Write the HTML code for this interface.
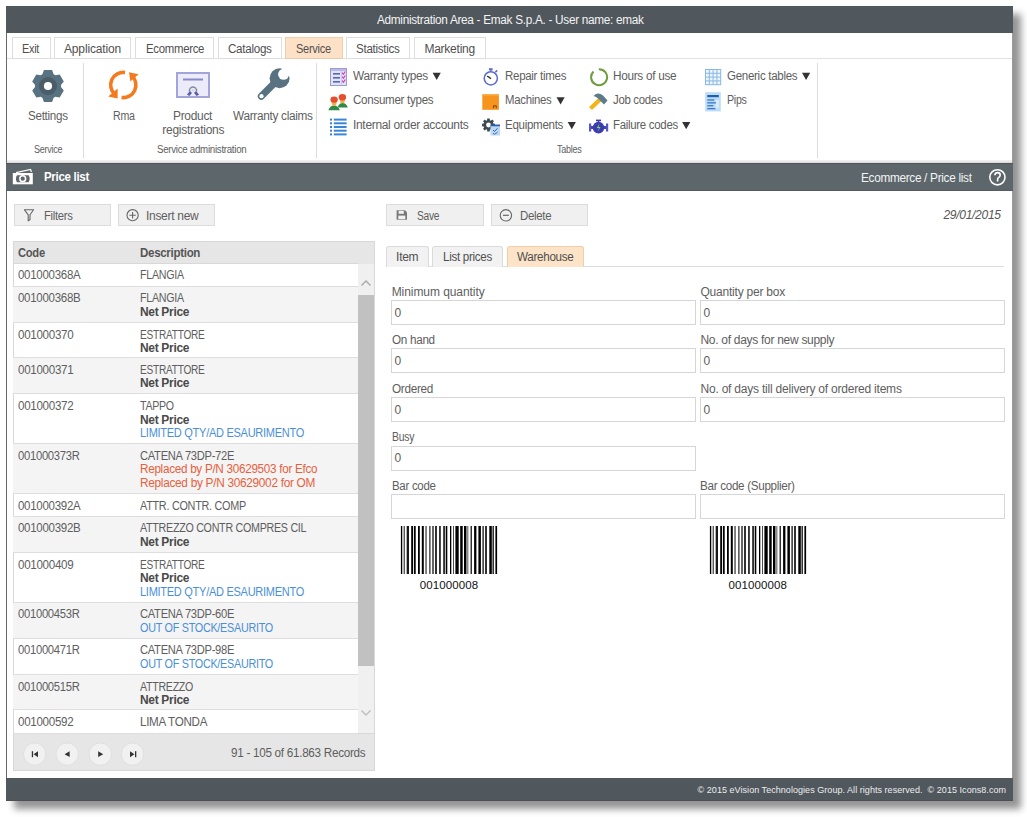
<!DOCTYPE html>
<html><head><meta charset="utf-8"><style>
*{margin:0;padding:0;box-sizing:border-box}
html,body{width:1027px;height:817px;overflow:hidden;background:#fff;font-family:"Liberation Sans",sans-serif}
.a{position:absolute}
.t{position:absolute;white-space:pre;font-family:"Liberation Sans",sans-serif}
.row{position:absolute;left:13px;width:345px}
</style></head><body>
<div class="a" style="left:6px;top:6px;width:1007px;height:795px;background:#fff;box-shadow:8px 8px 7px rgba(0,0,0,0.42);border-left:1px solid #6a6a6a;border-right:1px solid #9a9a9a"></div>
<!-- title bar -->
<div class="a" style="left:6px;top:6px;width:1007px;height:27px;background:#50575d"></div>
<!-- tabs -->
<div class="a" style="left:7px;top:58px;width:1005px;height:1px;background:#e2e2e2"></div>
<div class="a" style="left:12px;top:37px;width:39px;height:22px;border:1px solid #dedede;background:#fff"></div>
<div class="a" style="left:54px;top:37px;width:77px;height:22px;border:1px solid #dedede;background:#fff"></div>
<div class="a" style="left:135px;top:37px;width:79px;height:22px;border:1px solid #dedede;background:#fff"></div>
<div class="a" style="left:218px;top:37px;width:64px;height:22px;border:1px solid #dedede;background:#fff"></div>
<div class="a" style="left:285px;top:37px;width:58px;height:22px;border:1px solid #f3cda6;border-bottom-color:#e9c9a9;background:#fde1c6"></div>
<div class="a" style="left:346px;top:37px;width:64px;height:22px;border:1px solid #dedede;background:#fff"></div>
<div class="a" style="left:414px;top:37px;width:72px;height:22px;border:1px solid #dedede;background:#fff"></div>
<!-- ribbon separators -->
<div class="a" style="left:83px;top:63px;width:1px;height:95px;background:#dcdcdc"></div>
<div class="a" style="left:316px;top:63px;width:1px;height:95px;background:#dcdcdc"></div>
<div class="a" style="left:817px;top:63px;width:1px;height:95px;background:#dcdcdc"></div>
<!-- band -->
<div class="a" style="left:7px;top:160px;width:1005px;height:3px;background:linear-gradient(#f3f3f3,#dcdcdc)"></div>
<!-- header -->
<div class="a" style="left:6px;top:163px;width:1007px;height:28px;background:#5c666b;border-top:1px solid #4f5459;border-bottom:1px solid #555c61"></div>
<!-- footer -->
<div class="a" style="left:6px;top:778px;width:1007px;height:23px;background:#50575d;border-bottom:1px solid #4d4f52"></div>
<!-- buttons -->
<div class="a" style="left:14px;top:204px;width:97px;height:22px;background:#f0f0f0;border:1px solid #dcdcdc"></div>
<div class="a" style="left:118px;top:204px;width:97px;height:22px;background:#f0f0f0;border:1px solid #dcdcdc"></div>
<div class="a" style="left:386px;top:204px;width:98px;height:22px;background:#f0f0f0;border:1px solid #dcdcdc"></div>
<div class="a" style="left:491px;top:204px;width:97px;height:22px;background:#f0f0f0;border:1px solid #dcdcdc"></div>
<!-- grid -->
<div class="a" style="left:13px;top:241px;width:362px;height:530px;border:1px solid #d8d8d8;background:#fff"></div>
<div class="a" style="left:13px;top:241px;width:362px;height:22.6px;background:#e6e6e6;border:1px solid #d8d8d8;border-bottom:0"></div>
<div class="a" style="left:14px;top:263px;width:344px;height:1px;background:#d8d8d8"></div>
<div class="a" style="left:358px;top:264px;width:16px;height:469px;background:#f0f0f0"></div>
<div class="a" style="left:358px;top:295px;width:16px;height:371px;background:#c1c1c1"></div>
<div class="a" style="left:13px;top:733px;width:362px;height:38px;background:#e6e6e6;border:1px solid #d8d8d8"></div>
<!-- right tabs -->
<div class="a" style="left:386px;top:266px;width:618px;height:1px;background:#dedede"></div>
<div class="a" style="left:386px;top:246px;width:43px;height:21px;border:1px solid #dadada;border-bottom:0;border-radius:3px 3px 0 0;background:#f2f2f2"></div>
<div class="a" style="left:432px;top:246px;width:71px;height:21px;border:1px solid #dadada;border-bottom:0;border-radius:3px 3px 0 0;background:#f2f2f2"></div>
<div class="a" style="left:507px;top:246px;width:77px;height:21px;border:1px solid #f3cda6;border-bottom:0;border-radius:3px 3px 0 0;background:#fde3c8"></div>
<!-- inputs -->
<div class="a" style="left:391px;top:300px;width:305px;height:25px;border:1px solid #d6d6d6"></div>
<div class="a" style="left:391px;top:348px;width:305px;height:25px;border:1px solid #d6d6d6"></div>
<div class="a" style="left:391px;top:397px;width:305px;height:25px;border:1px solid #d6d6d6"></div>
<div class="a" style="left:391px;top:446px;width:305px;height:25px;border:1px solid #d6d6d6"></div>
<div class="a" style="left:391px;top:494px;width:305px;height:25px;border:1px solid #d6d6d6"></div>
<div class="a" style="left:700px;top:300px;width:305px;height:25px;border:1px solid #d6d6d6"></div>
<div class="a" style="left:700px;top:348px;width:305px;height:25px;border:1px solid #d6d6d6"></div>
<div class="a" style="left:700px;top:397px;width:305px;height:25px;border:1px solid #d6d6d6"></div>
<div class="a" style="left:700px;top:494px;width:305px;height:25px;border:1px solid #d6d6d6"></div>
<svg class="a" style="left:28px;top:66px;" width="40" height="40" viewBox="28 66 40 40"><path d="M42.40,74.27 L43.90,70.12 L52.10,70.12 L53.60,74.27 L55.36,75.28 L59.70,74.51 L63.80,81.61 L60.96,84.98 L60.96,87.02 L63.80,90.39 L59.70,97.49 L55.36,96.72 L53.60,97.73 L52.10,101.88 L43.90,101.88 L42.40,97.73 L40.64,96.72 L36.30,97.49 L32.20,90.39 L35.04,87.02 L35.04,84.98 L32.20,81.61 L36.30,74.51 L40.64,75.28Z" fill="#587282"/><circle cx="48" cy="86" r="9" fill="#4a5d69"/><circle cx="48" cy="86" r="4.1" fill="#fff"/></svg>
<svg class="a" style="left:104px;top:66px;" width="38" height="38" viewBox="104 66 38 38"><path d="M125.05,72.52 A12.6,12.6 0 0 0 114.71,94.22" stroke="#f47a1f" stroke-width="3.6" fill="none"/><path d="M121.55,97.48 A12.6,12.6 0 0 0 131.89,75.78" stroke="#f47a1f" stroke-width="3.6" fill="none"/><path d="M108.2,96.5 L117.6,88.6 L117.6,98.5Z" fill="#f47a1f"/><path d="M129,72.2 L138.6,74.2 L130.4,81.5Z" fill="#f47a1f"/></svg>
<svg class="a" style="left:172px;top:68px;" width="42" height="34" viewBox="172 68 42 34"><rect x="177" y="73" width="32" height="24" fill="#ebebf9" stroke="#a4a4dc" stroke-width="2"/><rect x="183" y="78.5" width="20" height="2" fill="#8b8bcb"/><path d="M189.5,91.5 A3.6,3.6 0 1 1 196.5,91.5" stroke="#7a8a9a" stroke-width="1.4" fill="none"/><circle cx="193" cy="90.3" r="1.6" fill="#d8d8f0"/><path d="M187,94.5 L190,91 L192,93 L189.3,96Z M199,94.5 L196,91 L194,93 L196.7,96Z" fill="#5a5aae"/></svg>
<svg class="a" style="left:252px;top:64px;" width="44" height="42" viewBox="252 64 44 42"><line x1="261.3" y1="96.3" x2="276" y2="81.5" stroke="#587282" stroke-width="7" stroke-linecap="round"/><circle cx="279.6" cy="78.2" r="10" fill="#587282"/><circle cx="283.6" cy="74.3" r="5.5" fill="#fff"/><path d="M281.5,68.5 L289.5,76.5 L296,70 L288,62Z" fill="#fff"/><circle cx="261.5" cy="96.2" r="2.1" fill="#fff"/></svg>
<svg class="a" style="left:329px;top:67px;" width="19" height="20" viewBox="329 67 19 20"><rect x="330.5" y="68.5" width="16" height="17" fill="#e3e3f6" stroke="#9b9bd6" stroke-width="1"/><rect x="331" y="69" width="15" height="2" fill="#b9b9e3"/><rect x="333" y="73" width="7" height="1.6" fill="#5568b8"/><path d="M342,72.5 L343.4,74.3 L345.3,71.5" stroke="#d23cc0" stroke-width="1.2" fill="none"/><rect x="333" y="77" width="7" height="1.6" fill="#5568b8"/><path d="M342,76.5 L343.4,78.3 L345.3,75.5" stroke="#d23cc0" stroke-width="1.2" fill="none"/><rect x="333" y="81" width="7" height="1.6" fill="#5568b8"/><path d="M342,80.5 L343.4,82.3 L345.3,79.5" stroke="#d23cc0" stroke-width="1.2" fill="none"/><rect x="341" y="71" width="1" height="14" fill="#c8c8ee"/></svg>
<svg class="a" style="left:327px;top:92px;" width="24" height="20" viewBox="327 92 24 20"><path d="M337.6,107.6 Q339,103 342.5,103 Q346.3,103 347.8,107.6Z" fill="#2f8a45"/><ellipse cx="342.4" cy="100.4" rx="2.5" ry="2.9" fill="#f6ad4c"/><ellipse cx="342.4" cy="97.2" rx="3.7" ry="3.2" fill="#e4502d"/><path d="M328.4,110.2 Q329.8,105.5 334,105.5 Q338.2,105.5 339.8,110.2Z" fill="#2f8a45"/><ellipse cx="334.1" cy="102.8" rx="2.5" ry="2.9" fill="#f6ad4c"/><ellipse cx="334.1" cy="99.6" rx="3.7" ry="3.2" fill="#e4502d"/></svg>
<svg class="a" style="left:329px;top:117px;" width="19" height="20" viewBox="329 117 19 20"><rect x="330" y="118.6" width="2" height="2" fill="#3a7fcf"/><rect x="333.8" y="118.6" width="12.8" height="2" fill="#3a86d6"/><rect x="330" y="122.3" width="2" height="2" fill="#3a7fcf"/><rect x="333.8" y="122.3" width="12.8" height="2" fill="#3a86d6"/><rect x="330" y="126.0" width="2" height="2" fill="#3a7fcf"/><rect x="333.8" y="126.0" width="12.8" height="2" fill="#3a86d6"/><rect x="330" y="129.7" width="2" height="2" fill="#3a7fcf"/><rect x="333.8" y="129.7" width="12.8" height="2" fill="#3a86d6"/><rect x="330" y="133.4" width="2" height="2" fill="#3a7fcf"/><rect x="333.8" y="133.4" width="12.8" height="2" fill="#3a86d6"/></svg>
<svg class="a" style="left:482px;top:67px;" width="18" height="20" viewBox="482 67 18 20"><circle cx="490.8" cy="78.3" r="6.6" fill="#fff" stroke="#5d6bd2" stroke-width="1.5"/><rect x="489" y="68.2" width="3.6" height="2.2" fill="#5d6bd2"/><rect x="490.2" y="70" width="1.2" height="2" fill="#5d6bd2"/><path d="M495.3,72.3 L497.2,70.4" stroke="#5d6bd2" stroke-width="1.6"/><path d="M487.2,76 L491,78.6" stroke="#333" stroke-width="1.5"/></svg>
<svg class="a" style="left:481px;top:93px;" width="19" height="18" viewBox="481 93 19 18"><rect x="482.3" y="94.2" width="16.6" height="15.6" fill="#f7941d"/><rect x="482.3" y="94.2" width="16.6" height="1.3" fill="#fbb04e"/><path d="M493.5,108.2 L493.5,105.8 L496.3,105.8 L496.3,108.2" stroke="#6b3a08" stroke-width="0.9" fill="none"/></svg>
<svg class="a" style="left:481px;top:117px;" width="20" height="20" viewBox="481 117 20 20"><path d="M487.12,120.19 L487.19,118.53 L489.81,118.53 L489.88,120.19 L490.92,120.63 L492.15,119.50 L494.00,121.35 L492.87,122.58 L493.31,123.62 L494.97,123.69 L494.97,126.31 L493.31,126.38 L492.87,127.42 L494.00,128.65 L492.15,130.50 L490.92,129.37 L489.88,129.81 L489.81,131.47 L487.19,131.47 L487.12,129.81 L486.08,129.37 L484.85,130.50 L483.00,128.65 L484.13,127.42 L483.69,126.38 L482.03,126.31 L482.03,123.69 L483.69,123.62 L484.13,122.58 L483.00,121.35 L484.85,119.50 L486.08,120.63Z" fill="#3d4a52"/><circle cx="488.5" cy="125" r="2.4" fill="#fff"/><rect x="490.5" y="125" width="9.5" height="10.5" fill="#bcd8f4"/><rect x="490.5" y="124.5" width="9.5" height="1.8" fill="#2f62b5"/><path d="M493,130 L494.5,131.5 L497.5,128.3" stroke="#2f62b5" stroke-width="1" fill="none"/><path d="M493,133.3 L494.5,134.3 L497.5,132.3" stroke="#2f62b5" stroke-width="0.9" fill="none"/></svg>
<svg class="a" style="left:588px;top:67px;" width="22" height="20" viewBox="588 67 22 20"><path d="M593.5,71.5 A8,8 0 1 0 598.8,69.2" stroke="#6f9c3d" stroke-width="2" fill="none"/></svg>
<svg class="a" style="left:587px;top:91px;" width="22" height="21" viewBox="587 91 22 21"><line x1="590.5" y1="108.5" x2="600" y2="99.5" stroke="#f5b416" stroke-width="4.2" stroke-linecap="butt"/><path d="M593.5,96 Q598,91.5 603,95.5 L607.5,100.5 L604,104.5 L600,100.5 L597.5,98 Q595.5,96.5 593.5,96Z" fill="#5b7b8b"/></svg>
<svg class="a" style="left:588px;top:118px;" width="22" height="17" viewBox="588 118 22 17"><rect x="589" y="123.5" width="2.2" height="8" fill="#5656c0"/><rect x="591" y="126" width="3" height="3" fill="#4444b8"/><rect x="606" y="123.5" width="2.2" height="8" fill="#5656c0"/><rect x="603" y="126" width="3" height="3" fill="#4444b8"/><circle cx="598.5" cy="127.6" r="5.8" fill="#3b3bb2"/><rect x="596" y="119.6" width="5" height="1.6" fill="#3b3bb2"/><rect x="597.8" y="120.5" width="1.4" height="2" fill="#3b3bb2"/><path d="M599.5,123.5 L596.8,128 L599,128 L597.5,132 L600.5,127 L598.5,127Z" fill="#8ee04a"/></svg>
<svg class="a" style="left:704px;top:68px;" width="18" height="18" viewBox="704 68 18 18"><rect x="705" y="69" width="15.6" height="15.6" fill="#eef6fd"/><rect x="705.0" y="69" width="1" height="16" fill="#88b9e6"/><rect x="705" y="69.0" width="16" height="1" fill="#88b9e6"/><rect x="708.8" y="69" width="1" height="16" fill="#88b9e6"/><rect x="705" y="72.8" width="16" height="1" fill="#88b9e6"/><rect x="712.6" y="69" width="1" height="16" fill="#88b9e6"/><rect x="705" y="76.6" width="16" height="1" fill="#88b9e6"/><rect x="716.4" y="69" width="1" height="16" fill="#88b9e6"/><rect x="705" y="80.4" width="16" height="1" fill="#88b9e6"/><rect x="720.2" y="69" width="1" height="16" fill="#88b9e6"/><rect x="705" y="84.2" width="16" height="1" fill="#88b9e6"/></svg>
<svg class="a" style="left:704px;top:91px;" width="18" height="22" viewBox="704 91 18 22"><rect x="705.2" y="92.2" width="15.6" height="19.2" fill="#bcdcf7"/><rect x="707.3" y="95" width="11.5" height="2.2" fill="#1f5fb0"/><rect x="707.3" y="99.3" width="7" height="1.3" fill="#3a78c6"/><rect x="707.3" y="102.2" width="9" height="1.3" fill="#3a78c6"/><rect x="707.3" y="105.1" width="6" height="1.3" fill="#3a78c6"/><rect x="707.3" y="108" width="8" height="1.3" fill="#3a78c6"/><rect x="715.8" y="100" width="3" height="8" fill="#eaf4fd" opacity="0.7"/></svg>
<svg class="a" style="left:431px;top:71px;" width="12" height="10" viewBox="431 71 12 10"><path d="M432.6,72.8 L440.8,72.8 L436.70000000000005,80.0Z" fill="#333"/></svg>
<svg class="a" style="left:555px;top:96px;" width="12" height="10" viewBox="555 96 12 10"><path d="M556.5,97.2 L564.7,97.2 L560.6,104.4Z" fill="#333"/></svg>
<svg class="a" style="left:566px;top:121px;" width="12" height="10" viewBox="566 121 12 10"><path d="M567.7,122 L575.9000000000001,122 L571.8000000000001,129.2Z" fill="#333"/></svg>
<svg class="a" style="left:681px;top:121px;" width="12" height="10" viewBox="681 121 12 10"><path d="M682.1,122 L690.3000000000001,122 L686.2,129.2Z" fill="#333"/></svg>
<svg class="a" style="left:801px;top:71px;" width="12" height="10" viewBox="801 71 12 10"><path d="M802,72.8 L810.2,72.8 L806.1,80.0Z" fill="#333"/></svg>
<svg class="a" style="left:10px;top:166px;" width="26" height="22" viewBox="10 166 26 22"><rect x="12.8" y="173" width="20" height="11.3" fill="#fff"/><path d="M16,172.6 L30.6,169.5 L31.4,172" stroke="#fff" stroke-width="1.2" fill="none"/><path d="M17,175.2 L28.6,175.2 Q30.8,178.8 28.6,182.3 L17,182.3 Q14.8,178.8 17,175.2Z" fill="#5f666c"/><circle cx="22.7" cy="178.7" r="2.9" fill="none" stroke="#fff" stroke-width="1.5"/></svg>
<svg class="a" style="left:986px;top:166px;" width="24" height="24" viewBox="986 166 24 24"><circle cx="997.4" cy="177.3" r="7.6" fill="none" stroke="#fff" stroke-width="1.6"/><path d="M994.9,175.2 Q995,172.6 997.6,172.6 Q1000.2,172.6 1000.2,175 Q1000.2,176.6 998.5,177.6 Q997.6,178.2 997.6,179.6 L997.6,181.6" stroke="#fff" stroke-width="1.6" fill="none"/></svg>
<svg class="a" style="left:22px;top:207px;" width="14" height="16" viewBox="22 207 14 16"><path d="M24.5,209.8 L33.6,209.8 L30,214.8 L30,219.8 L28.2,220.8 L28.2,214.8Z" fill="none" stroke="#666" stroke-width="1.1" stroke-linejoin="round"/></svg>
<svg class="a" style="left:125px;top:208px;" width="15" height="15" viewBox="125 208 15 15"><circle cx="132.6" cy="215.2" r="5.6" fill="none" stroke="#666" stroke-width="1.1"/><path d="M132.6,212 L132.6,218.4 M129.4,215.2 L135.8,215.2" stroke="#666" stroke-width="1.1"/></svg>
<svg class="a" style="left:394px;top:208px;" width="15" height="15" viewBox="394 208 15 15"><path d="M396.6,210.2 L405,210.2 L407,212.2 L407,219.8 L396.6,219.8Z" fill="#777"/><rect x="398.6" y="210.8" width="5.2" height="3" fill="#f0f0f0"/><rect x="398.3" y="215.6" width="7" height="3.6" fill="#f0f0f0"/></svg>
<svg class="a" style="left:498px;top:208px;" width="16" height="16" viewBox="498 208 16 16"><circle cx="505.9" cy="215.3" r="5.7" fill="none" stroke="#666" stroke-width="1.1"/><path d="M502.9,215.3 L508.9,215.3" stroke="#666" stroke-width="1.2"/></svg>
<svg class="a" style="left:360px;top:277px;" width="12" height="10" viewBox="360 277 12 10"><path d="M361.5,285.5 L366,281 L370.5,285.5" stroke="#a8a8a8" stroke-width="1.4" fill="none"/></svg>
<svg class="a" style="left:360px;top:708px;" width="12" height="10" viewBox="360 708 12 10"><path d="M361.5,710.5 L366,715 L370.5,710.5" stroke="#bdbdbd" stroke-width="1.4" fill="none"/></svg>
<svg class="a" style="left:20px;top:740px;" width="128" height="29" viewBox="20 740 128 29"><circle cx="34.7" cy="754.1" r="11.2" fill="#f1f1f1" stroke="#dcdcdc" stroke-width="0.8"/><circle cx="67.2" cy="754.1" r="11.2" fill="#f1f1f1" stroke="#dcdcdc" stroke-width="0.8"/><circle cx="100.3" cy="754.1" r="11.2" fill="#f1f1f1" stroke="#dcdcdc" stroke-width="0.8"/><circle cx="132.6" cy="754.1" r="11.2" fill="#f1f1f1" stroke="#dcdcdc" stroke-width="0.8"/><rect x="31.8" y="751.2" width="1.3" height="6" fill="#333"/><path d="M38,751.2 L38,757.2 L33.6,754.2Z" fill="#333"/><path d="M69.6,751.3 L69.6,757.1 L64.6,754.2Z" fill="#333"/><path d="M98.2,751.3 L98.2,757.1 L103.2,754.2Z" fill="#333"/><rect x="135" y="751.2" width="1.3" height="6" fill="#333"/><path d="M130,751.2 L130,757.2 L134.4,754.2Z" fill="#333"/></svg>
<svg class="a" style="left:399px;top:524px;" width="100" height="52" viewBox="399 524 100 52"><rect x="400.9" y="526" width="1.3" height="48" fill="#000"/><rect x="402.8" y="526" width="1.0" height="48" fill="#000" fill-opacity="0.35"/><rect x="404.0" y="526" width="0.8" height="48" fill="#000" fill-opacity="0.8"/><rect x="406.4" y="526" width="0.7" height="48" fill="#000" fill-opacity="0.5"/><rect x="407.1" y="526" width="1.8" height="48" fill="#000"/><rect x="411.2" y="526" width="1.8" height="48" fill="#000"/><rect x="413.9" y="526" width="1.8" height="48" fill="#000"/><rect x="418.0" y="526" width="1.8" height="48" fill="#000"/><rect x="421.8" y="526" width="2.0" height="48" fill="#000"/><rect x="425.3" y="526" width="1.5" height="48" fill="#000" fill-opacity="0.65"/><rect x="429.1" y="526" width="1.5" height="48" fill="#000" fill-opacity="0.7"/><rect x="432.4" y="526" width="1.2" height="48" fill="#000"/><rect x="435.2" y="526" width="1.6" height="48" fill="#000"/><rect x="439.2" y="526" width="1.5" height="48" fill="#000"/><rect x="443.3" y="526" width="1.5" height="48" fill="#000"/><rect x="444.8" y="526" width="1.0" height="48" fill="#000" fill-opacity="0.35"/><rect x="446.0" y="526" width="1.3" height="48" fill="#000"/><rect x="450.0" y="526" width="1.3" height="48" fill="#000"/><rect x="453.1" y="526" width="0.7" height="48" fill="#000"/><rect x="455.4" y="526" width="3.3" height="48" fill="#000"/><rect x="460.2" y="526" width="2.5" height="48" fill="#000"/><rect x="464.0" y="526" width="2.0" height="48" fill="#000"/><rect x="466.0" y="526" width="2.5" height="48" fill="#000" fill-opacity="0.45"/><rect x="470.6" y="526" width="1.2" height="48" fill="#000"/><rect x="474.1" y="526" width="2.3" height="48" fill="#000"/><rect x="478.4" y="526" width="2.5" height="48" fill="#000"/><rect x="482.5" y="526" width="1.2" height="48" fill="#000"/><rect x="485.2" y="526" width="1.6" height="48" fill="#000"/><rect x="489.3" y="526" width="2.5" height="48" fill="#000"/><rect x="491.8" y="526" width="1.0" height="48" fill="#000" fill-opacity="0.4"/><rect x="492.8" y="526" width="1.0" height="48" fill="#000"/><rect x="495.4" y="526" width="1.7" height="48" fill="#000"/></svg>
<svg class="a" style="left:708px;top:524px;" width="100" height="52" viewBox="708 524 100 52"><rect x="709.9" y="526" width="1.3" height="48" fill="#000"/><rect x="711.8" y="526" width="1.0" height="48" fill="#000" fill-opacity="0.35"/><rect x="713.0" y="526" width="0.8" height="48" fill="#000" fill-opacity="0.8"/><rect x="715.4" y="526" width="0.7" height="48" fill="#000" fill-opacity="0.5"/><rect x="716.1" y="526" width="1.8" height="48" fill="#000"/><rect x="720.2" y="526" width="1.8" height="48" fill="#000"/><rect x="722.9" y="526" width="1.8" height="48" fill="#000"/><rect x="727.0" y="526" width="1.8" height="48" fill="#000"/><rect x="730.8" y="526" width="2.0" height="48" fill="#000"/><rect x="734.3" y="526" width="1.5" height="48" fill="#000" fill-opacity="0.65"/><rect x="738.1" y="526" width="1.5" height="48" fill="#000" fill-opacity="0.7"/><rect x="741.4" y="526" width="1.2" height="48" fill="#000"/><rect x="744.2" y="526" width="1.6" height="48" fill="#000"/><rect x="748.2" y="526" width="1.5" height="48" fill="#000"/><rect x="752.3" y="526" width="1.5" height="48" fill="#000"/><rect x="753.8" y="526" width="1.0" height="48" fill="#000" fill-opacity="0.35"/><rect x="755.0" y="526" width="1.3" height="48" fill="#000"/><rect x="759.0" y="526" width="1.3" height="48" fill="#000"/><rect x="762.1" y="526" width="0.7" height="48" fill="#000"/><rect x="764.4" y="526" width="3.3" height="48" fill="#000"/><rect x="769.2" y="526" width="2.5" height="48" fill="#000"/><rect x="773.0" y="526" width="2.0" height="48" fill="#000"/><rect x="775.0" y="526" width="2.5" height="48" fill="#000" fill-opacity="0.45"/><rect x="779.6" y="526" width="1.2" height="48" fill="#000"/><rect x="783.1" y="526" width="2.3" height="48" fill="#000"/><rect x="787.4" y="526" width="2.5" height="48" fill="#000"/><rect x="791.5" y="526" width="1.2" height="48" fill="#000"/><rect x="794.2" y="526" width="1.6" height="48" fill="#000"/><rect x="798.3" y="526" width="2.5" height="48" fill="#000"/><rect x="800.8" y="526" width="1.0" height="48" fill="#000" fill-opacity="0.4"/><rect x="801.8" y="526" width="1.0" height="48" fill="#000"/><rect x="804.4" y="526" width="1.7" height="48" fill="#000"/></svg>
<div class="row" style="top:285.80px;height:1px;background:#dedede"></div><div class="row" style="top:286.80px;height:35.20px;background:#f4f4f4"></div><div class="row" style="top:322.00px;height:1px;background:#dedede"></div><div class="row" style="top:357.10px;height:1px;background:#dedede"></div><div class="row" style="top:358.10px;height:35.20px;background:#f4f4f4"></div><div class="row" style="top:393.30px;height:1px;background:#dedede"></div><div class="row" style="top:443.00px;height:1px;background:#dedede"></div><div class="row" style="top:444.00px;height:49.40px;background:#f4f4f4"></div><div class="row" style="top:493.40px;height:1px;background:#dedede"></div><div class="row" style="top:515.80px;height:1px;background:#dedede"></div><div class="row" style="top:516.80px;height:35.20px;background:#f4f4f4"></div><div class="row" style="top:552.00px;height:1px;background:#dedede"></div><div class="row" style="top:601.60px;height:1px;background:#dedede"></div><div class="row" style="top:602.60px;height:35.20px;background:#f4f4f4"></div><div class="row" style="top:637.80px;height:1px;background:#dedede"></div><div class="row" style="top:674.00px;height:1px;background:#dedede"></div><div class="row" style="top:675.00px;height:34.00px;background:#f4f4f4"></div><div class="row" style="top:709.00px;height:1px;background:#dedede"></div><div class="row" style="top:732.50px;height:1px;background:#dedede"></div>
<span id="t0" class="t" style="left:377.0px;top:12.94px;font-size:12px;line-height:14px;color:#f4f4f4;letter-spacing:-0.300px;transform:scaleX(0.9824);transform-origin:0 0;">Administration Area - Emak S.p.A. - User name: emak</span><span id="t1" class="t" style="left:22.4px;top:42.24px;font-size:12px;line-height:14px;color:#505050;letter-spacing:-0.300px;transform:scaleX(0.9050);transform-origin:0 0;">Exit</span><span id="t2" class="t" style="left:64.0px;top:42.24px;font-size:12px;line-height:14px;color:#505050;letter-spacing:-0.152px;">Application</span><span id="t3" class="t" style="left:145.6px;top:42.24px;font-size:12px;line-height:14px;color:#505050;letter-spacing:-0.300px;transform:scaleX(0.9478);transform-origin:0 0;">Ecommerce</span><span id="t4" class="t" style="left:228.3px;top:42.24px;font-size:12px;line-height:14px;color:#505050;letter-spacing:-0.300px;transform:scaleX(0.9696);transform-origin:0 0;">Catalogs</span><span id="t5" class="t" style="left:296.4px;top:42.24px;font-size:12px;line-height:14px;color:#505050;letter-spacing:-0.300px;transform:scaleX(0.9185);transform-origin:0 0;">Service</span><span id="t6" class="t" style="left:356.3px;top:42.24px;font-size:12px;line-height:14px;color:#505050;letter-spacing:-0.300px;transform:scaleX(0.9666);transform-origin:0 0;">Statistics</span><span id="t7" class="t" style="left:424.4px;top:42.24px;font-size:12px;line-height:14px;color:#505050;letter-spacing:-0.236px;">Marketing</span><span id="t8" class="t" style="left:28.2px;top:109.04px;font-size:12px;line-height:14px;color:#5e5e5e;letter-spacing:-0.300px;transform:scaleX(0.9695);transform-origin:0 0;">Settings</span><span id="t9" class="t" style="left:112.9px;top:109.04px;font-size:12px;line-height:14px;color:#5e5e5e;letter-spacing:-0.300px;transform:scaleX(0.8851);transform-origin:0 0;">Rma</span><span id="t10" class="t" style="left:173.4px;top:109.04px;font-size:12px;line-height:14px;color:#5e5e5e;letter-spacing:-0.300px;transform:scaleX(0.9960);transform-origin:0 0;">Product</span><span id="t11" class="t" style="left:162.3px;top:123.04px;font-size:12px;line-height:14px;color:#5e5e5e;letter-spacing:-0.265px;">registrations</span><span id="t12" class="t" style="left:232.7px;top:109.04px;font-size:12px;line-height:14px;color:#5e5e5e;letter-spacing:-0.300px;transform:scaleX(0.9831);transform-origin:0 0;">Warranty claims</span><span id="t13" class="t" style="left:34.0px;top:143.73px;font-size:10px;line-height:12px;color:#5e5e5e;letter-spacing:-0.300px;transform:scaleX(0.8999);transform-origin:0 0;">Service</span><span id="t14" class="t" style="left:157.3px;top:143.73px;font-size:10px;line-height:12px;color:#5e5e5e;letter-spacing:-0.300px;transform:scaleX(0.9742);transform-origin:0 0;">Service administration</span><span id="t15" class="t" style="left:557.1px;top:143.73px;font-size:10px;line-height:12px;color:#5e5e5e;letter-spacing:-0.300px;transform:scaleX(0.9086);transform-origin:0 0;">Tables</span><span id="t16" class="t" style="left:352.7px;top:69.04px;font-size:12px;line-height:14px;color:#5e5e5e;letter-spacing:-0.300px;transform:scaleX(0.9862);transform-origin:0 0;">Warranty types</span><span id="t17" class="t" style="left:352.7px;top:93.24px;font-size:12px;line-height:14px;color:#5e5e5e;letter-spacing:-0.300px;transform:scaleX(0.9656);transform-origin:0 0;">Consumer types</span><span id="t18" class="t" style="left:352.7px;top:118.14px;font-size:12px;line-height:14px;color:#5e5e5e;letter-spacing:-0.300px;transform:scaleX(0.9961);transform-origin:0 0;">Internal order accounts</span><span id="t19" class="t" style="left:505.1px;top:69.04px;font-size:12px;line-height:14px;color:#5e5e5e;letter-spacing:-0.300px;transform:scaleX(0.9585);transform-origin:0 0;">Repair times</span><span id="t20" class="t" style="left:505.1px;top:93.24px;font-size:12px;line-height:14px;color:#5e5e5e;letter-spacing:-0.300px;transform:scaleX(0.9480);transform-origin:0 0;">Machines</span><span id="t21" class="t" style="left:505.1px;top:118.14px;font-size:12px;line-height:14px;color:#5e5e5e;letter-spacing:-0.300px;transform:scaleX(0.9625);transform-origin:0 0;">Equipments</span><span id="t22" class="t" style="left:612.7px;top:69.04px;font-size:12px;line-height:14px;color:#5e5e5e;letter-spacing:-0.300px;transform:scaleX(0.9823);transform-origin:0 0;">Hours of use</span><span id="t23" class="t" style="left:612.7px;top:93.24px;font-size:12px;line-height:14px;color:#5e5e5e;letter-spacing:-0.300px;transform:scaleX(0.9483);transform-origin:0 0;">Job codes</span><span id="t24" class="t" style="left:612.7px;top:118.14px;font-size:12px;line-height:14px;color:#5e5e5e;letter-spacing:-0.300px;transform:scaleX(0.9526);transform-origin:0 0;">Failure codes</span><span id="t25" class="t" style="left:727.2px;top:69.04px;font-size:12px;line-height:14px;color:#5e5e5e;letter-spacing:-0.300px;transform:scaleX(0.9609);transform-origin:0 0;">Generic tables</span><span id="t26" class="t" style="left:727.2px;top:93.24px;font-size:12px;line-height:14px;color:#5e5e5e;letter-spacing:-0.300px;transform:scaleX(0.8867);transform-origin:0 0;">Pips</span><span id="t27" class="t" style="left:43.5px;top:170.34px;font-size:12px;line-height:14px;color:#fff;font-weight:bold;letter-spacing:-0.300px;transform:scaleX(0.9571);transform-origin:0 0;">Price list</span><span id="t28" class="t" style="left:861.3px;top:170.64px;font-size:12px;line-height:14px;color:#f4f4f4;letter-spacing:-0.300px;transform:scaleX(0.9809);transform-origin:0 0;">Ecommerce / Price list</span><span id="t29" class="t" style="left:43.7px;top:208.54px;font-size:12px;line-height:14px;color:#5e5e5e;letter-spacing:-0.300px;transform:scaleX(0.9361);transform-origin:0 0;">Filters</span><span id="t30" class="t" style="left:146.0px;top:208.54px;font-size:12px;line-height:14px;color:#5e5e5e;letter-spacing:-0.295px;">Insert new</span><span id="t31" class="t" style="left:416.6px;top:208.54px;font-size:12px;line-height:14px;color:#5e5e5e;letter-spacing:-0.300px;transform:scaleX(0.8466);transform-origin:0 0;">Save</span><span id="t32" class="t" style="left:520.0px;top:208.54px;font-size:12px;line-height:14px;color:#5e5e5e;letter-spacing:-0.300px;transform:scaleX(0.9522);transform-origin:0 0;">Delete</span><span id="t33" class="t" style="left:943.4px;top:208.34px;font-size:12px;line-height:14px;color:#555;font-style:italic;letter-spacing:-0.274px;">29/01/2015</span><span id="t34" class="t" style="left:17.8px;top:245.94px;font-size:12px;line-height:14px;color:#555;font-weight:bold;letter-spacing:-0.300px;transform:scaleX(0.9313);transform-origin:0 0;">Code</span><span id="t35" class="t" style="left:140.3px;top:245.94px;font-size:12px;line-height:14px;color:#555;font-weight:bold;letter-spacing:-0.300px;transform:scaleX(0.9585);transform-origin:0 0;">Description</span><span id="t36" class="t" style="left:17.6px;top:268.44px;font-size:12px;line-height:14px;color:#5e5e5e;letter-spacing:-0.300px;transform:scaleX(0.9590);transform-origin:0 0;">001000368A</span><span id="t37" class="t" style="left:139.8px;top:268.44px;font-size:12px;line-height:14px;color:#5e5e5e;letter-spacing:-0.300px;transform:scaleX(0.8898);transform-origin:0 0;">FLANGIA</span><span id="t38" class="t" style="left:17.6px;top:291.44px;font-size:12px;line-height:14px;color:#5e5e5e;letter-spacing:-0.300px;transform:scaleX(0.9590);transform-origin:0 0;">001000368B</span><span id="t39" class="t" style="left:139.8px;top:291.44px;font-size:12px;line-height:14px;color:#5e5e5e;letter-spacing:-0.300px;transform:scaleX(0.8898);transform-origin:0 0;">FLANGIA</span><span id="t40" class="t" style="left:139.8px;top:305.10px;font-size:12px;line-height:14px;color:#4a4a4a;font-weight:bold;letter-spacing:-0.300px;transform:scaleX(0.9953);transform-origin:0 0;">Net Price</span><span id="t41" class="t" style="left:17.6px;top:327.64px;font-size:12px;line-height:14px;color:#5e5e5e;letter-spacing:-0.300px;transform:scaleX(0.9657);transform-origin:0 0;">001000370</span><span id="t42" class="t" style="left:139.8px;top:327.64px;font-size:12px;line-height:14px;color:#5e5e5e;letter-spacing:-0.300px;transform:scaleX(0.8429);transform-origin:0 0;">ESTRATTORE</span><span id="t43" class="t" style="left:139.8px;top:341.30px;font-size:12px;line-height:14px;color:#4a4a4a;font-weight:bold;letter-spacing:-0.300px;transform:scaleX(0.9953);transform-origin:0 0;">Net Price</span><span id="t44" class="t" style="left:17.6px;top:362.74px;font-size:12px;line-height:14px;color:#5e5e5e;letter-spacing:-0.300px;transform:scaleX(0.9657);transform-origin:0 0;">001000371</span><span id="t45" class="t" style="left:139.8px;top:362.74px;font-size:12px;line-height:14px;color:#5e5e5e;letter-spacing:-0.300px;transform:scaleX(0.8429);transform-origin:0 0;">ESTRATTORE</span><span id="t46" class="t" style="left:139.8px;top:376.40px;font-size:12px;line-height:14px;color:#4a4a4a;font-weight:bold;letter-spacing:-0.300px;transform:scaleX(0.9953);transform-origin:0 0;">Net Price</span><span id="t47" class="t" style="left:17.6px;top:398.94px;font-size:12px;line-height:14px;color:#5e5e5e;letter-spacing:-0.300px;transform:scaleX(0.9657);transform-origin:0 0;">001000372</span><span id="t48" class="t" style="left:139.8px;top:398.94px;font-size:12px;line-height:14px;color:#5e5e5e;letter-spacing:-0.300px;transform:scaleX(0.8835);transform-origin:0 0;">TAPPO</span><span id="t49" class="t" style="left:139.8px;top:412.60px;font-size:12px;line-height:14px;color:#4a4a4a;font-weight:bold;letter-spacing:-0.300px;transform:scaleX(0.9953);transform-origin:0 0;">Net Price</span><span id="t50" class="t" style="left:139.8px;top:426.26px;font-size:12px;line-height:14px;color:#4a8fd8;letter-spacing:-0.300px;transform:scaleX(0.9180);transform-origin:0 0;">LIMITED QTY/AD ESAURIMENTO</span><span id="t51" class="t" style="left:17.6px;top:448.64px;font-size:12px;line-height:14px;color:#5e5e5e;letter-spacing:-0.300px;transform:scaleX(0.9374);transform-origin:0 0;">001000373R</span><span id="t52" class="t" style="left:139.8px;top:448.64px;font-size:12px;line-height:14px;color:#5e5e5e;letter-spacing:-0.300px;transform:scaleX(0.9289);transform-origin:0 0;">CATENA 73DP-72E</span><span id="t53" class="t" style="left:139.8px;top:462.30px;font-size:12px;line-height:14px;color:#e7603d;letter-spacing:-0.300px;transform:scaleX(0.9765);transform-origin:0 0;">Replaced by P/N 30629503 for Efco</span><span id="t54" class="t" style="left:139.8px;top:475.96px;font-size:12px;line-height:14px;color:#e7603d;letter-spacing:-0.300px;transform:scaleX(0.9866);transform-origin:0 0;">Replaced by P/N 30629002 for OM</span><span id="t55" class="t" style="left:17.6px;top:499.04px;font-size:12px;line-height:14px;color:#5e5e5e;letter-spacing:-0.300px;transform:scaleX(0.9590);transform-origin:0 0;">001000392A</span><span id="t56" class="t" style="left:139.8px;top:499.04px;font-size:12px;line-height:14px;color:#5e5e5e;letter-spacing:-0.300px;transform:scaleX(0.9028);transform-origin:0 0;">ATTR. CONTR. COMP</span><span id="t57" class="t" style="left:17.6px;top:521.44px;font-size:12px;line-height:14px;color:#5e5e5e;letter-spacing:-0.300px;transform:scaleX(0.9590);transform-origin:0 0;">001000392B</span><span id="t58" class="t" style="left:139.8px;top:521.44px;font-size:12px;line-height:14px;color:#5e5e5e;letter-spacing:-0.300px;transform:scaleX(0.8906);transform-origin:0 0;">ATTREZZO CONTR COMPRES CIL</span><span id="t59" class="t" style="left:139.8px;top:535.10px;font-size:12px;line-height:14px;color:#4a4a4a;font-weight:bold;letter-spacing:-0.300px;transform:scaleX(0.9953);transform-origin:0 0;">Net Price</span><span id="t60" class="t" style="left:17.6px;top:557.64px;font-size:12px;line-height:14px;color:#5e5e5e;letter-spacing:-0.300px;transform:scaleX(0.9657);transform-origin:0 0;">001000409</span><span id="t61" class="t" style="left:139.8px;top:557.64px;font-size:12px;line-height:14px;color:#5e5e5e;letter-spacing:-0.300px;transform:scaleX(0.8429);transform-origin:0 0;">ESTRATTORE</span><span id="t62" class="t" style="left:139.8px;top:571.30px;font-size:12px;line-height:14px;color:#4a4a4a;font-weight:bold;letter-spacing:-0.300px;transform:scaleX(0.9953);transform-origin:0 0;">Net Price</span><span id="t63" class="t" style="left:139.8px;top:584.96px;font-size:12px;line-height:14px;color:#4a8fd8;letter-spacing:-0.300px;transform:scaleX(0.9180);transform-origin:0 0;">LIMITED QTY/AD ESAURIMENTO</span><span id="t64" class="t" style="left:17.6px;top:607.24px;font-size:12px;line-height:14px;color:#5e5e5e;letter-spacing:-0.300px;transform:scaleX(0.9374);transform-origin:0 0;">001000453R</span><span id="t65" class="t" style="left:139.8px;top:607.24px;font-size:12px;line-height:14px;color:#5e5e5e;letter-spacing:-0.300px;transform:scaleX(0.9289);transform-origin:0 0;">CATENA 73DP-60E</span><span id="t66" class="t" style="left:139.8px;top:620.90px;font-size:12px;line-height:14px;color:#4a8fd8;letter-spacing:-0.300px;transform:scaleX(0.8998);transform-origin:0 0;">OUT OF STOCK/ESAURITO</span><span id="t67" class="t" style="left:17.6px;top:643.44px;font-size:12px;line-height:14px;color:#5e5e5e;letter-spacing:-0.300px;transform:scaleX(0.9374);transform-origin:0 0;">001000471R</span><span id="t68" class="t" style="left:139.8px;top:643.44px;font-size:12px;line-height:14px;color:#5e5e5e;letter-spacing:-0.300px;transform:scaleX(0.9289);transform-origin:0 0;">CATENA 73DP-98E</span><span id="t69" class="t" style="left:139.8px;top:657.10px;font-size:12px;line-height:14px;color:#4a8fd8;letter-spacing:-0.300px;transform:scaleX(0.8998);transform-origin:0 0;">OUT OF STOCK/ESAURITO</span><span id="t70" class="t" style="left:17.6px;top:679.64px;font-size:12px;line-height:14px;color:#5e5e5e;letter-spacing:-0.300px;transform:scaleX(0.9374);transform-origin:0 0;">001000515R</span><span id="t71" class="t" style="left:139.8px;top:679.64px;font-size:12px;line-height:14px;color:#5e5e5e;letter-spacing:-0.300px;transform:scaleX(0.8834);transform-origin:0 0;">ATTREZZO</span><span id="t72" class="t" style="left:139.8px;top:693.30px;font-size:12px;line-height:14px;color:#4a4a4a;font-weight:bold;letter-spacing:-0.300px;transform:scaleX(0.9953);transform-origin:0 0;">Net Price</span><span id="t73" class="t" style="left:17.6px;top:714.64px;font-size:12px;line-height:14px;color:#5e5e5e;letter-spacing:-0.300px;transform:scaleX(0.9657);transform-origin:0 0;">001000592</span><span id="t74" class="t" style="left:139.8px;top:714.64px;font-size:12px;line-height:14px;color:#5e5e5e;letter-spacing:-0.300px;transform:scaleX(0.9691);transform-origin:0 0;">LIMA TONDA</span><span id="t75" class="t" style="left:230.7px;top:745.74px;font-size:12px;line-height:14px;color:#5e5e5e;letter-spacing:-0.300px;transform:scaleX(0.9758);transform-origin:0 0;">91 - 105 of 61.863 Records</span><span id="t76" class="t" style="left:396.1px;top:249.64px;font-size:12px;line-height:14px;color:#505050;letter-spacing:-0.281px;">Item</span><span id="t77" class="t" style="left:443.2px;top:249.64px;font-size:12px;line-height:14px;color:#505050;letter-spacing:-0.300px;transform:scaleX(0.9661);transform-origin:0 0;">List prices</span><span id="t78" class="t" style="left:517.1px;top:249.64px;font-size:12px;line-height:14px;color:#505050;letter-spacing:-0.300px;transform:scaleX(0.9706);transform-origin:0 0;">Warehouse</span><span id="t79" class="t" style="left:391.7px;top:285.04px;font-size:12px;line-height:14px;color:#5e5e5e;letter-spacing:-0.069px;">Minimum quantity</span><span id="t80" class="t" style="left:391.7px;top:333.44px;font-size:12px;line-height:14px;color:#5e5e5e;letter-spacing:-0.300px;transform:scaleX(0.9741);transform-origin:0 0;">On hand</span><span id="t81" class="t" style="left:391.7px;top:381.94px;font-size:12px;line-height:14px;color:#5e5e5e;letter-spacing:-0.300px;transform:scaleX(0.9779);transform-origin:0 0;">Ordered</span><span id="t82" class="t" style="left:391.7px;top:430.44px;font-size:12px;line-height:14px;color:#5e5e5e;letter-spacing:-0.300px;transform:scaleX(0.8686);transform-origin:0 0;">Busy</span><span id="t83" class="t" style="left:391.7px;top:478.94px;font-size:12px;line-height:14px;color:#5e5e5e;letter-spacing:-0.300px;transform:scaleX(0.9558);transform-origin:0 0;">Bar code</span><span id="t84" class="t" style="left:700.5px;top:285.04px;font-size:12px;line-height:14px;color:#5e5e5e;letter-spacing:-0.218px;">Quantity per box</span><span id="t85" class="t" style="left:700.5px;top:333.44px;font-size:12px;line-height:14px;color:#5e5e5e;letter-spacing:-0.292px;">No. of days for new supply</span><span id="t86" class="t" style="left:700.5px;top:381.94px;font-size:12px;line-height:14px;color:#5e5e5e;letter-spacing:-0.212px;">No. of days till delivery of ordered items</span><span id="t87" class="t" style="left:700.3px;top:478.94px;font-size:12px;line-height:14px;color:#5e5e5e;letter-spacing:-0.300px;transform:scaleX(0.9695);transform-origin:0 0;">Bar code (Supplier)</span><span id="t88" class="t" style="left:394.4px;top:306.04px;font-size:12px;line-height:14px;color:#5e5e5e;">0</span><span id="t89" class="t" style="left:394.4px;top:354.44px;font-size:12px;line-height:14px;color:#5e5e5e;">0</span><span id="t90" class="t" style="left:394.4px;top:402.94px;font-size:12px;line-height:14px;color:#5e5e5e;">0</span><span id="t91" class="t" style="left:394.4px;top:451.44px;font-size:12px;line-height:14px;color:#5e5e5e;">0</span><span id="t92" class="t" style="left:703.4px;top:306.04px;font-size:12px;line-height:14px;color:#5e5e5e;">0</span><span id="t93" class="t" style="left:703.4px;top:354.44px;font-size:12px;line-height:14px;color:#5e5e5e;">0</span><span id="t94" class="t" style="left:703.4px;top:402.94px;font-size:12px;line-height:14px;color:#5e5e5e;">0</span><span id="t95" class="t" style="left:419.8px;top:577.82px;font-size:11.5px;line-height:14px;color:#111;letter-spacing:0.105px;">001000008</span><span id="t96" class="t" style="left:728.5px;top:577.82px;font-size:11.5px;line-height:14px;color:#111;letter-spacing:0.117px;">001000008</span><span id="t97" class="t" style="left:697.6px;top:784.68px;font-size:9px;line-height:11px;color:#eee;letter-spacing:0.045px;">© 2015 eVision Technologies Group. All rights reserved.  © 2015 Icons8.com</span>
</body></html>
